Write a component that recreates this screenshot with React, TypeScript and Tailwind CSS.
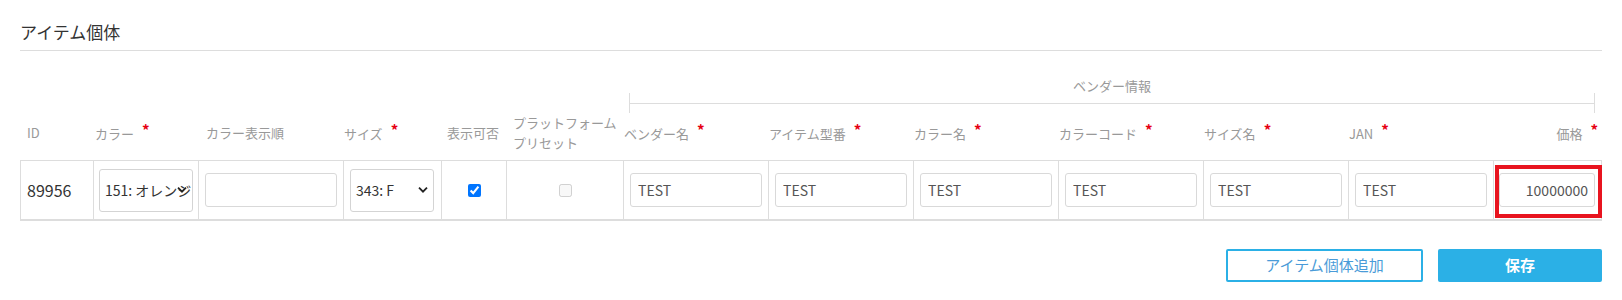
import React from 'react';

const grid =
  'grid grid-cols-[73px_105px_145px_98px_65px_117px_145px_145px_145px_145px_145px_145px_109px]';

function Req() {
  return <span className="ml-[8px] align-[3px] text-[15px] font-bold leading-none text-[#e60012]">*</span>;
}

function Chevron() {
  return (
    <svg width="10" height="7" viewBox="0 0 10 7" className="absolute right-[5px] top-1/2 z-10 -translate-y-1/2">
      <path d="M1 1.2 5 5.2 9 1.2" fill="none" stroke="#222" strokeWidth="1.8" />
    </svg>
  );
}

function Select({ value }: { value: string }) {
  return (
    <div className="relative flex h-[43px] w-full items-center overflow-hidden rounded-[3px] border border-[#d4d4d4] bg-white pl-[5px] text-[14px] text-[#333]">
      <span className="whitespace-nowrap">{value}</span>
      <Chevron />
    </div>
  );
}

function TextInput({ value = '', right = false }: { value?: string; right?: boolean }) {
  return (
    <input
      readOnly
      value={value}
      className={`h-[34px] w-full rounded-[3px] border border-[#d9d9d9] bg-white text-[14px] text-[#555] outline-none ${
        right ? 'pr-[6px] text-right' : 'pl-[7px]'
      }`}
    />
  );
}

const vendorCols = ['ベンダー名', 'アイテム型番', 'カラー名', 'カラーコード', 'サイズ名', 'JAN'];

export default function App() {
  return (
    <div className="min-h-screen bg-white px-5 font-['Noto_Sans_CJK_JP','Noto_Sans',sans-serif] text-[#333]">
      <h2 className="border-b border-[#ddd] pb-[6px] pt-5 text-[17px] font-normal leading-[24px]">アイテム個体</h2>

      {/* vendor group header */}
      <div className={`${grid} mt-[27px]`}>
        <div className="col-span-7 col-start-7 pl-[6px] pr-[7px]">
          <div className="text-center text-[13px] leading-[15px] text-[#999]">ベンダー情報</div>
          <div className="flex h-[20px] items-center border-x border-[#ddd]">
            <div className="h-px w-full bg-[#ddd]" />
          </div>
        </div>
      </div>

      {/* column labels */}
      <div className={`${grid} h-[47px] items-center pb-[7px] text-[13px] leading-[20px] text-[#999]`}>
        <div className="pl-[7px]">ID</div>
        <div className="pl-[2px]">
          カラー<Req />
        </div>
        <div className="pl-[8px]">カラー表示順</div>
        <div className="pl-[1px]">
          サイズ<Req />
        </div>
        <div className="pl-[6px]">表示可否</div>
        <div className="pl-[7px]">
          プラットフォーム
          <br />
          プリセット
        </div>
        {vendorCols.map((c) => (
          <div key={c} className="pl-[1px]">
            {c}
            <Req />
          </div>
        ))}
        <div className="pr-[4px] text-right">
          価格<Req />
        </div>
      </div>

      {/* item row */}
      <div className={`${grid} border-b-2 border-t border-[#ddd]`}>
        <div className="flex h-[58px] items-center border-l border-[#ddd] pl-[6px] text-[16px] text-[#333]">89956</div>
        <div className="flex h-[58px] items-center border-l border-[#ddd] pl-[5px] pr-[5px]">
          <Select value="151: オレンジ" />
        </div>
        <div className="flex h-[58px] items-center border-l border-[#ddd] pl-[6px] pr-[6px]">
          <TextInput />
        </div>
        <div className="flex h-[58px] items-center border-l border-[#ddd] pl-[6px] pr-[7px]">
          <Select value="343: F" />
        </div>
        <div className="flex h-[58px] items-center justify-center border-l border-[#ddd]">
          <input type="checkbox" defaultChecked className="m-0 h-[13px] w-[13px]" />
        </div>
        <div className="flex h-[58px] items-center justify-center border-l border-[#ddd]">
          <input type="checkbox" disabled className="m-0 h-[13px] w-[13px]" />
        </div>
        {vendorCols.map((c) => (
          <div key={c} className="flex h-[58px] items-center border-l border-[#ddd] pl-[6px] pr-[6px]">
            <TextInput value="TEST" />
          </div>
        ))}
        <div className="relative flex h-[58px] items-center border-x border-[#ddd] pl-[5px] pr-[6px]">
          <TextInput value="10000000" right />
          <div className="absolute bottom-[1px] left-[1px] right-[-1px] top-[4px] border-4 border-[#e8141f]" />
        </div>
      </div>

      <div className="mt-[28px] flex justify-end gap-[15px]">
        <button className="h-[33px] w-[197px] rounded-[2px] border-2 border-[#2bb0e6] bg-white text-[15px] text-[#4a9bd8]">
          アイテム個体追加
        </button>
        <button className="h-[33px] w-[164px] rounded-[2px] bg-[#2bb0e6] text-[15px] font-bold text-white">保存</button>
      </div>
    </div>
  );
}
